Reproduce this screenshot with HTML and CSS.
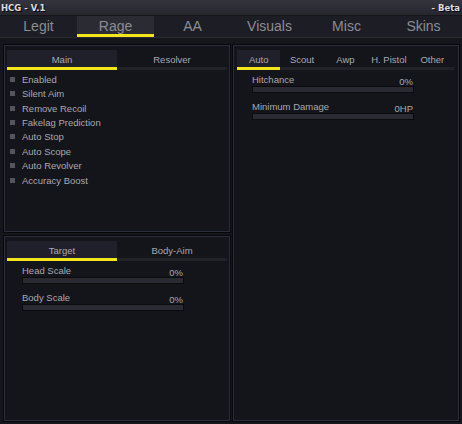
FILE: index.html
```html
<!DOCTYPE html>
<html>
<head>
<meta charset="utf-8">
<link rel="stylesheet" href="styles.css">
</head>
<body>
<div class="window">
  <div class="titlebar">
    <span class="title">HCG - V.1</span>
    <span class="title">- Beta</span>
  </div>
  <div class="tabs">
    <div class="tab">Legit</div>
    <div class="tab active">Rage</div>
    <div class="tab">AA</div>
    <div class="tab">Visuals</div>
    <div class="tab">Misc</div>
    <div class="tab">Skins</div>
  </div>
  <div class="content">
    <div class="col">
      <div class="panel panel-main">
        <div class="subtabs two">
          <div class="subtab active">Main</div>
          <div class="subtab">Resolver</div>
        </div>
        <div class="checks">
          <div class="check"><span class="box"></span>Enabled</div>
          <div class="check"><span class="box"></span>Silent Aim</div>
          <div class="check"><span class="box"></span>Remove Recoil</div>
          <div class="check"><span class="box"></span>Fakelag Prediction</div>
          <div class="check"><span class="box"></span>Auto Stop</div>
          <div class="check"><span class="box"></span>Auto Scope</div>
          <div class="check"><span class="box"></span>Auto Revolver</div>
          <div class="check"><span class="box"></span>Accuracy Boost</div>
        </div>
      </div>
      <div class="panel panel-target">
        <div class="subtabs two">
          <div class="subtab active">Target</div>
          <div class="subtab">Body-Aim</div>
        </div>
        <div class="sliders">
          <div class="slider">
            <div class="slider-head"><span>Head Scale</span><span class="val">0%</span></div>
            <div class="track"></div>
          </div>
          <div class="slider">
            <div class="slider-head"><span>Body Scale</span><span class="val">0%</span></div>
            <div class="track"></div>
          </div>
        </div>
      </div>
    </div>
    <div class="panel panel-right">
      <div class="subtabs five">
        <div class="subtab active">Auto</div>
        <div class="subtab">Scout</div>
        <div class="subtab">Awp</div>
        <div class="subtab">H. Pistol</div>
        <div class="subtab">Other</div>
      </div>
      <div class="sliders">
        <div class="slider">
          <div class="slider-head"><span>Hitchance</span><span class="val">0%</span></div>
          <div class="track"></div>
        </div>
        <div class="slider">
          <div class="slider-head"><span>Minimum Damage</span><span class="val">0HP</span></div>
          <div class="track"></div>
        </div>
      </div>
    </div>
  </div>
</div>
</body>
</html>
```
FILE: styles.css
```css
html, body {
  margin: 0;
  padding: 0;
}
* {
  box-sizing: border-box;
}
body {
  width: 462px;
  height: 424px;
  overflow: hidden;
  font-family: "Liberation Sans", Arial, sans-serif;
  background-color: #0b0b0f;
  background-image: radial-gradient(circle, #16161d 0.7px, transparent 0.8px);
  background-size: 2px 2px;
}
.window {
  width: 462px;
  height: 424px;
  display: flex;
  flex-direction: column;
}
.titlebar {
  height: 16px;
  display: flex;
  justify-content: space-between;
  align-items: center;
  padding: 0 2px 0 1px;
  background: linear-gradient(#34343e, #26262e);
  border-bottom: 1px solid #15151a;
}
.title {
  font-family: "DejaVu Sans", sans-serif;
  font-weight: bold;
  font-size: 8.5px;
  color: #dcdce0;
  text-shadow: 1px 1px 0 #000;
}
.tabs {
  height: 22px;
  display: grid;
  grid-template-columns: repeat(6, 1fr);
  background: #1d1d25;
  border-bottom: 1px solid #2a2a33;
}
.tab {
  display: flex;
  align-items: center;
  justify-content: center;
  font-size: 14px;
  color: #8c8c93;
  border-bottom: 3px solid transparent;
  padding-top: 2px;
}
.tab.active {
  background: #2b2b34;
  border-bottom-color: #f2e51e;
}
.content {
  flex: 1;
  display: grid;
  grid-template-columns: 226px 226px;
  gap: 3px;
  padding: 7px 3px 3px 4px;
  min-height: 0;
}
.col {
  display: flex;
  flex-direction: column;
  gap: 4px;
  min-height: 0;
}
.panel {
  background: #14141b;
  border: 1px solid #2a2d3b;
  box-shadow: 0 0 0 1px #08080b;
  padding: 4px 2px 0 2px;
}
.panel-main {
  height: 187px;
}
.panel-target {
  flex: 1;
}
.panel-right {
  padding: 4px 4px 0 3px;
}
.subtabs {
  display: grid;
  height: 20px;
}
.subtabs.two {
  grid-template-columns: 1fr 1fr;
}
.subtabs.five {
  grid-template-columns: repeat(5, 1fr);
}
.subtab {
  display: flex;
  align-items: center;
  justify-content: center;
  font-size: 9.5px;
  color: #a9a9af;
  border-bottom: 3px solid #21212a;
  padding-top: 2px;
}
.subtab.active {
  background: #20202a;
  border-bottom-color: #f2e51e;
}
.checks {
  padding: 2px 0 0 3px;
}
.check {
  height: 14.43px;
  display: flex;
  align-items: center;
  gap: 7px;
  font-size: 9.5px;
  color: #a9a9af;
}
.box {
  width: 5px;
  height: 5px;
  background: #55555e;
}
.sliders {
  padding: 2px 0 0 15px;
}
.slider {
  width: 162px;
  height: 27px;
}
.slider-head {
  display: flex;
  justify-content: space-between;
  align-items: flex-end;
  font-size: 9.5px;
  color: #a9a9af;
  height: 13px;
}
.slider-head .val {
  position: relative;
  top: 2px;
  padding-right: 1px;
}
.track {
  margin-top: 1px;
  height: 7px;
  background: #2a2a32;
  border: 1px solid #0b0b0e;
}
```
